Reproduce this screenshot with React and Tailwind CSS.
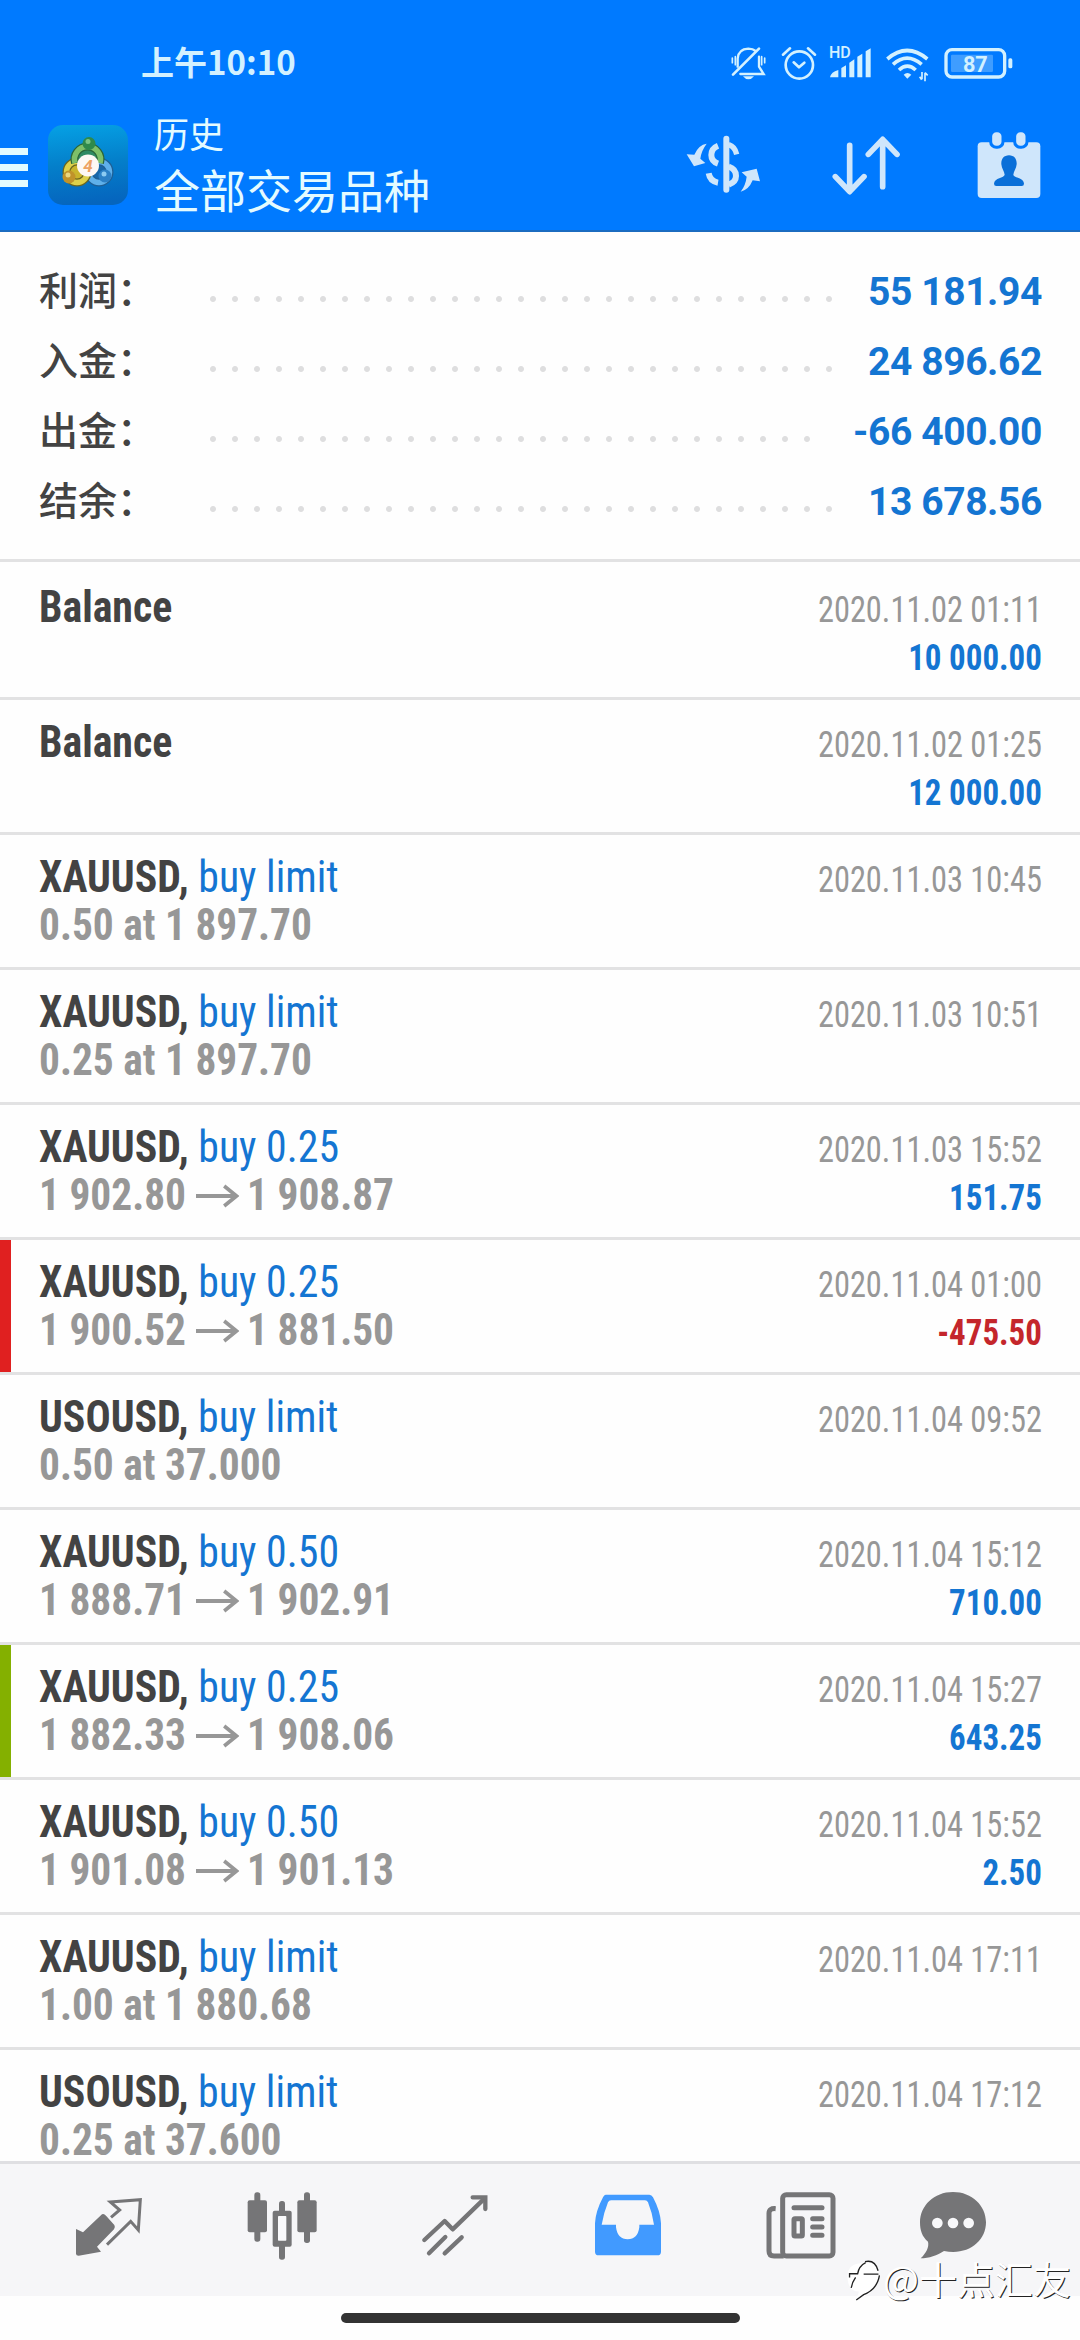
const SUMMARY = [
  { label: "利润：", value: "55 181.94" },
  { label: "入金：", value: "24 896.62" },
  { label: "出金：", value: "-66 400.00" },
  { label: "结余：", value: "13 678.56" },
];

const DEALS = [
  { symbol: "Balance", date: "2020.11.02 01:11", profit: "10 000.00" },
  { symbol: "Balance", date: "2020.11.02 01:25", profit: "12 000.00" },
  { symbol: "XAUUSD", type: "buy limit", at: "0.50 at 1 897.70", date: "2020.11.03 10:45" },
  { symbol: "XAUUSD", type: "buy limit", at: "0.25 at 1 897.70", date: "2020.11.03 10:51" },
  { symbol: "XAUUSD", type: "buy 0.25", from: "1 902.80", to: "1 908.87", date: "2020.11.03 15:52", profit: "151.75" },
  { symbol: "XAUUSD", type: "buy 0.25", from: "1 900.52", to: "1 881.50", date: "2020.11.04 01:00", profit: "-475.50", mark: "sl" },
  { symbol: "USOUSD", type: "buy limit", at: "0.50 at 37.000", date: "2020.11.04 09:52" },
  { symbol: "XAUUSD", type: "buy 0.50", from: "1 888.71", to: "1 902.91", date: "2020.11.04 15:12", profit: "710.00" },
  { symbol: "XAUUSD", type: "buy 0.25", from: "1 882.33", to: "1 908.06", date: "2020.11.04 15:27", profit: "643.25", mark: "tp" },
  { symbol: "XAUUSD", type: "buy 0.50", from: "1 901.08", to: "1 901.13", date: "2020.11.04 15:52", profit: "2.50" },
  { symbol: "XAUUSD", type: "buy limit", at: "1.00 at 1 880.68", date: "2020.11.04 17:11" },
  { symbol: "USOUSD", type: "buy limit", at: "0.25 at 37.600", date: "2020.11.04 17:12" },
];

const MARK = { sl: "bg-[#e02020]", tp: "bg-[#84b000]" };

function StatusBar() {
  return (
    <div className="flex h-[98px] items-center justify-between pt-[27px] pl-[141px] pr-[67px] text-[#d3f1ff]">
      <span className="pb-1 text-[33px] leading-[40px] font-bold">上午10:10</span>
      <div className="flex items-center gap-3">
        {/* silent */}
        <svg viewBox="266 125 120 120" className="h-10 w-10" fill="none" stroke="currentColor" strokeWidth="7" strokeLinecap="round">
          <path d="M292 196V172Q294 143 324 142Q338 142 346 149" />
          <path d="M356 166V196L370 218H300" />
          <path d="M278 220L356 142" strokeWidth="8" />
          <path d="M276 170V184M285 166V190M364 166V190M373 170V184" strokeWidth="5" />
          <path d="M308 225H341Q334 234 324 234Q315 234 308 225Z" fill="currentColor" stroke="none" />
        </svg>
        {/* alarm */}
        <svg viewBox="422 125 108 120" className="h-10 w-9" fill="none" stroke="currentColor" strokeWidth="8" strokeLinecap="round" strokeLinejoin="round">
          <circle cx="477" cy="191" r="41" />
          <path d="M460 183L476 198L492 184" />
          <path d="M428 160L449 141M524 160L503 141" />
        </svg>
        {/* signal */}
        <svg viewBox="566 125 132 120" className="h-10 w-11" fill="currentColor">
          <text x="566" y="171" fontSize="48" fontFamily="Roboto" fontWeight="500">HD</text>
          <path d="M569 228Q572 212 594 206V228ZM603 228V200L617 192V228ZM627 228V184L642 174V228ZM651 228V166L666 157V228ZM676 228V150L691 141V228Z" />
        </svg>
        {/* wifi */}
        <svg viewBox="734 125 138 120" className="h-10 w-[46px]" fill="none" stroke="currentColor" strokeWidth="11">
          <path d="M741 173Q800 122 861 173" />
          <path d="M758 189Q800 152 844 189" />
          <path d="M776 206Q801 183 826 206" />
          <path d="M790 220Q801 210 813 220L801 232Z" fill="currentColor" stroke="none" />
          <path d="M845 212V234M838 226L844 235M854 240V214M854 214L862 222" strokeWidth="5" />
        </svg>
        {/* battery */}
        <svg viewBox="908 125 210 120" className="h-10 w-[70px]">
          <rect x="917" y="145" width="176" height="82" rx="18" fill="none" stroke="currentColor" strokeWidth="10" />
          <rect x="932" y="160" width="126" height="52" rx="4" fill="#3f9dff" />
          <rect x="1104" y="171" width="12" height="30" rx="5" fill="currentColor" />
          <text x="1005" y="211" textAnchor="middle" fontSize="65" fontFamily="Roboto" fontWeight="700" fill="currentColor">87</text>
        </svg>
      </div>
    </div>
  );
}

function AppLogo() {
  return (
    <svg viewBox="48 125 80 80" className="ml-5 h-20 w-20">
      <defs>
        <linearGradient id="tile" x1="0.2" y1="0" x2="0.3" y2="1">
          <stop offset="0" stopColor="#05a0e4" />
          <stop offset="0.5" stopColor="#047fca" />
          <stop offset="1" stopColor="#0565be" />
        </linearGradient>
      </defs>
      <rect x="48" y="125" width="80" height="80" rx="15" fill="url(#tile)" />
      <circle cx="99" cy="172" r="10.5" fill="#1766a8" stroke="#1f5f94" strokeWidth="8" />
      <circle cx="99" cy="172" r="10.5" fill="none" stroke="#5fb0ea" strokeWidth="5.5" />
      <circle cx="77" cy="172" r="10.5" fill="#c9b42c" stroke="#6b661f" strokeWidth="8" />
      <circle cx="77" cy="172" r="10.5" fill="none" stroke="#ddd04a" strokeWidth="5.5" />
      <path d="M75 163A13 13 0 1 1 100 163" fill="#2f8a63" stroke="#2b6538" strokeWidth="8" />
      <path d="M75 163A13 13 0 1 1 100 163" fill="none" stroke="#7dc069" strokeWidth="5.5" />
      <circle cx="89" cy="143.5" r="6.5" fill="#2f8a4b" />
      <circle cx="88" cy="141.5" r="2.5" fill="#79c486" />
      <circle cx="69" cy="177" r="6.5" fill="#c0932a" />
      <circle cx="68" cy="175" r="2.5" fill="#ead77f" />
      <circle cx="105" cy="176" r="6.5" fill="#2b80c6" />
      <circle cx="104" cy="174" r="2.5" fill="#8ccbf2" />
      <circle cx="88" cy="165.5" r="11" fill="#fdf8f4" />
      <text x="88" y="171.5" textAnchor="middle" fontSize="17" fontStyle="italic" fontWeight="700" fontFamily="Roboto" fill="#eda263">4</text>
    </svg>
  );
}

function Toolbar() {
  return (
    <div className="flex h-[134px] items-center pr-[31px]">
      <div className="flex w-7 flex-col gap-[9px] pt-[5px]">
        <div className="h-[7px] bg-[#e2fbff]" />
        <div className="h-[7px] bg-[#e2fbff]" />
        <div className="h-[7px] bg-[#e2fbff]" />
      </div>
      <AppLogo />
      <div className="ml-[26px] flex flex-1 flex-col pb-1 text-[#e4fbff]">
        <span className="text-[35px] leading-[50px]">历史</span>
        <span className="text-[46px] leading-[60px]">全部交易品种</span>
      </div>
      <div className="flex items-center gap-[63px] text-[#cfe6fb]">
        {/* currency */}
        <svg viewBox="125 375 240 240" className="size-20" fill="none" stroke="currentColor" strokeWidth="18">
          <path d="M255 416V569" strokeLinecap="round" />
          <path d="M230 437Q210 445 210 465Q210 484 230 491" />
          <path d="M262 434Q281 440 286 463" strokeWidth="16" />
          <path d="M262 500Q284 507 284 528Q284 546 262 554" />
          <path d="M202 520Q206 544 230 548" />
          <path d="M196 431Q172 434 159 464L136 463L158 499L192 489L177 476Q180 452 196 431Z" fill="currentColor" stroke="none" />
          <path d="M298 575Q322 570 334 541L356 544L346 506L301 517L316 530Q313 556 298 575Z" fill="currentColor" stroke="none" />
        </svg>
        {/* sort */}
        <svg viewBox="555 375 240 240" className="size-20" fill="none" stroke="currentColor" strokeWidth="17" strokeLinecap="round" strokeLinejoin="round">
          <path d="M626 436V574M583 530L626 575L669 530" />
          <path d="M725 560V420M682 463L725 418L768 463" />
        </svg>
        {/* period */}
        <svg viewBox="984 375 240 240" className="size-20" fill="currentColor">
          <rect x="1010" y="427" width="188" height="167" rx="12" />
          <g stroke="#007aff" strokeWidth="9">
            <rect x="1049" y="392" width="37" height="50" rx="17" />
            <rect x="1121" y="392" width="37" height="50" rx="17" />
          </g>
          <path d="M1104 466C1120 466 1128 478 1127 493C1126 506 1118 514 1117 524C1118 534 1148 532 1149 551Q1149 558 1142 558H1066Q1059 558 1059 551C1060 532 1090 534 1091 524C1090 514 1082 506 1081 493C1080 478 1088 466 1104 466Z" fill="#0a6fd8" />
        </svg>
      </div>
    </div>
  );
}

function Summary() {
  return (
    <section className="mb-[3px] h-[330px] shrink-0 border-b-[3px] border-[#e2e2e3] pt-6 pr-[38px] pl-[39px]">
      {SUMMARY.map(({ label, value }) => (
        <div key={label} className="flex h-[70px] items-center">
          <span className="w-[163px] pb-[6px] text-[39px] leading-[64px] font-medium text-[#434343]">{label}</span>
          <span className="mt-[15px] mr-[31px] h-[22px] flex-1 bg-[radial-gradient(circle,#dededf_2.5px,transparent_3.5px)] bg-[length:22px_22px]" />
          <span className="pt-[2px] font-['Roboto'] text-[39px] leading-[68px] font-bold tracking-[-0.4px] text-[#1475d2]">{value}</span>
        </div>
      ))}
    </section>
  );
}

function Arrow() {
  return (
    <svg viewBox="0 0 46 24" className="mr-[8px] ml-[11px] inline h-6 w-[46px] align-[2px]" fill="none" stroke="currentColor" strokeWidth="4">
      <path d="M0 12H42M30 2L43 12L30 22" />
    </svg>
  );
}

function DealRow({ deal }) {
  const { symbol, type, at, from, to, date, profit, mark } = deal;
  const loss = profit?.startsWith("-");
  return (
    <li className="flex h-[135px] shrink-0 border-b-[3px] border-[#e2e2e3] pr-[38px]">
      <div className={`w-[11px] ${MARK[mark] || ""}`} />
      <div className="flex-1 pt-[18px] pl-[28px] text-[44px] leading-[48px] font-bold whitespace-nowrap">
        <div className="origin-left scale-x-[0.95] text-[#434343]">
          {symbol}{type && ", "}
          {type && <span className="font-normal text-[#1475d2]">{type}</span>}
        </div>
        <div className="origin-left scale-x-[0.94] text-[#979797]">
          {at}
          {from && <>{from}<Arrow />{to}</>}
        </div>
      </div>
      <div className="pt-[21px] text-right text-[36px] leading-[48px] whitespace-nowrap">
        <div className="origin-right scale-x-[0.9] text-[#979797]">{date}</div>
        <div className={`origin-right scale-x-[0.915] font-bold ${loss ? "text-[#c4262b]" : "text-[#1475d2]"}`}>{profit}</div>
      </div>
    </li>
  );
}

function BottomNav() {
  return (
    <nav className="flex h-[135px] shrink-0 items-center border-t-[3px] border-[#dfdfe2] bg-[#f6f6f8] pb-[8px] pl-[22px] text-[#757577]">
      {/* quotes */}
      <div className="flex w-[173px] justify-center">
        <svg viewBox="41 38 210 210" className="size-[70px]" fill="none" stroke="currentColor" strokeWidth="9">
          <path d="M47 152L68 162L125 108Q131 105 137 112L162 140Q166 147 161 153L110 205L122 220L55 232Q47 232 47 226Z" fill="currentColor" stroke="none" />
          <path d="M152 117L178 95L150 71L240 64L234 155L211 129L140 199" />
        </svg>
      </div>
      {/* chart */}
      <div className="flex w-[173px] justify-center">
        <svg viewBox="558 38 210 210" className="size-[70px]" fill="currentColor">
          <rect x="580" y="42" width="18" height="148" rx="8" />
          <rect x="560" y="66" width="58" height="96" rx="6" />
          <rect x="729" y="42" width="18" height="152" rx="8" />
          <rect x="709" y="66" width="58" height="96" rx="6" />
          <rect x="654" y="68" width="18" height="176" rx="8" />
          <rect x="635" y="97" width="57" height="108" rx="6" />
          <rect x="651" y="113" width="25" height="74" rx="2" fill="#f9f9fb" />
        </svg>
      </div>
      {/* trade */}
      <div className="flex w-[173px] justify-center">
        <svg viewBox="1078 38 210 210" className="size-[70px]" fill="none" stroke="currentColor" strokeWidth="13" strokeLinecap="round">
          <path d="M1091 185L1152 128L1176 153L1268 64" strokeLinejoin="round" />
          <path d="M1236 57H1274V92" />
          <path d="M1262 54H1278V72Z" fill="currentColor" stroke="none" />
          <path d="M1105 225L1154 176M1152 225L1203 177" />
        </svg>
      </div>
      {/* history */}
      <div className="flex w-[173px] justify-center text-[#419aff]">
        <svg viewBox="38 38 210 210" className="size-[70px]" fill="currentColor">
          <path fillRule="evenodd" d="M76 49H207Q214 49 218 57Q240 98 242 135V220Q242 231 231 231H55Q44 231 44 220V135Q46 98 68 57Q71 49 76 49ZM92 66Q86 66 83 72Q70 104 64 139H107V147Q112 183 142 183Q172 183 177 147V139H221Q216 104 203 72Q200 66 194 66Z" />
        </svg>
      </div>
      {/* news */}
      <div className="flex w-[173px] justify-center">
        <svg viewBox="559 38 210 210" className="size-[70px]" fill="none" stroke="currentColor" strokeWidth="15">
          <path d="M588 91Q568 89 568 105V218Q568 233 583 233H612" />
          <rect x="609" y="49" width="151" height="184" rx="11" />
          <path d="M643 88H727" strokeLinecap="round" />
          <path d="M699 121H727M699 146H727M699 171H727" strokeLinecap="round" />
          <rect x="643" y="121" width="25" height="52" rx="3" />
        </svg>
      </div>
      {/* messages */}
      <div className="flex w-[131px] justify-center">
        <svg viewBox="1014 38 210 210" className="size-[70px]" fill="currentColor">
          <path d="M1119 41C1176 41 1218 82 1218 132C1218 190 1162 233 1092 218C1072 231 1047 240 1022 240C1038 224 1048 207 1044 190C1026 175 1020 156 1020 132C1020 82 1062 41 1119 41Z" />
          <g fill="#f8f8fa">
            <circle cx="1072" cy="134" r="16" />
            <circle cx="1119" cy="134" r="16" />
            <circle cx="1166" cy="134" r="16" />
          </g>
        </svg>
      </div>
    </nav>
  );
}

function Watermark() {
  return (
    <div className="absolute right-[9px] bottom-[38px] flex items-center text-white">
      <svg viewBox="796 245 105 125" className="mt-1 h-[42px] w-[37px]" fill="none">
        <path d="M836 258Q796 262 798 300Q800 342 832 342L824 367Q892 344 892 295Q890 244 836 258Z" fill="#fff" />
        <path d="M850 253Q880 246 889 280M893 294Q886 336 846 351L824 367M852 256Q832 266 828 289H804V300M822 300Q812 314 809 331M846 290H890" stroke="#222" strokeWidth="4" />
      </svg>
      <span className="text-[38px] leading-[48px] [text-shadow:1px_1px_0_#222]">@十点汇友</span>
    </div>
  );
}

export default function App() {
  return (
    <div className="relative flex h-[2340px] w-[1080px] flex-col overflow-hidden bg-[#fefefe] font-['Noto_Sans_CJK_SC',sans-serif]">
      <header className="h-[232px] shrink-0 border-b-2 border-[#1b6cc0] bg-[#007aff]">
        <StatusBar />
        <Toolbar />
      </header>
      <main className="flex h-[1929px] shrink-0 flex-col overflow-hidden">
        <Summary />
        <ul className="flex flex-col font-['Roboto_Condensed',sans-serif]">
          {DEALS.map((deal) => <DealRow key={deal.date} deal={deal} />)}
        </ul>
      </main>
      <BottomNav />
      <div className="flex justify-center pt-[17px]">
        <div className="h-[10px] w-[399px] rounded-full bg-[#333]" />
      </div>
      <Watermark />
    </div>
  );
}
